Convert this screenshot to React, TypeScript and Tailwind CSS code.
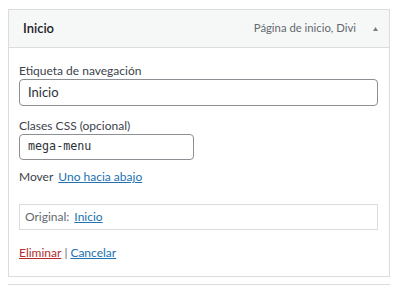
export default function App() {
  return (
    <div className="min-h-[285px] w-[400px] bg-white pt-[9px] pl-[8px] font-['Lato','Noto_Sans',sans-serif] text-[12px] text-[#3c434a]">
      <div className="w-[382px] border border-[#dcdcde]">
        <div className="flex h-[38px] items-center border-b border-[#dcdcde] bg-[#f6f7f7] pl-[14px] pr-[10px]">
          <span className="flex-1 text-[13px] font-semibold text-[#1d2327]">Inicio</span>
          <span className="text-[11.3px] text-[#646970]">Página de inicio, Divi</span>
          <svg width="7" height="6" viewBox="0 0 7 6" className="ml-[16px]">
            <path d="M3.5 1 L6 5 L1 5 Z" fill="#787c82" />
          </svg>
        </div>
        <div className="px-[10px] pt-[15px] pb-[15px]">
          <label className="block h-[16px] leading-[16px]">Etiqueta de navegación</label>
          <div className="flex h-[27px] w-[359px] items-center rounded-[4px] border border-[#8c8f94] px-[8px] text-[13px] text-[#2c3338]">
            Inicio
          </div>
          <label className="mt-[12px] block h-[16px] leading-[16px]">Clases CSS (opcional)</label>
          <div className="flex h-[26px] w-[175px] items-center rounded-[4px] border border-[#8c8f94] px-[8px] font-['DejaVu_Sans_Mono',monospace] text-[11.7px] text-[#2c3338]">
            mega-menu
          </div>
          <div className="mt-[9px] flex h-[16px] items-center gap-[5px] leading-[16px]">
            <span>Mover</span>
            <a className="text-[#2271b1] underline">Uno hacia abajo</a>
          </div>
          <div className="mt-[19px] flex h-[26px] w-[359px] items-center gap-[5px] border border-[#dcdcde] px-[5px] text-[#646970]">
            <span>Original:</span>
            <a className="text-[#2271b1] underline">Inicio</a>
          </div>
          <div className="mt-[15px] flex h-[16px] items-center gap-[3px] leading-[16px]">
            <a className="text-[#b32d2e] underline">Eliminar</a>
            <span className="text-[#646970]">|</span>
            <a className="text-[#2271b1] underline">Cancelar</a>
          </div>
        </div>
      </div>
      <div className="mt-[7px] w-[382px] border-t border-[#dcdcde]" />
    </div>
  );
}
